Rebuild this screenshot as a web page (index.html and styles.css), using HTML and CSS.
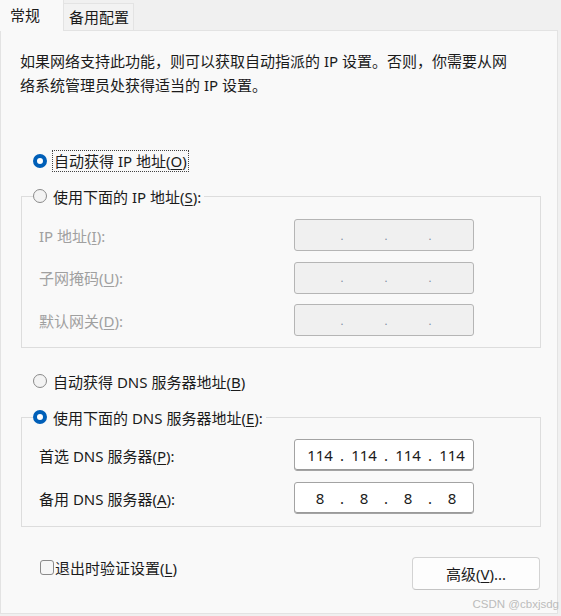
FILE: index.html
```html
<!DOCTYPE html>
<html lang="zh-CN">
<head>
<meta charset="utf-8">
<title>IPv4 属性</title>
<link rel="stylesheet" href="styles.css">
</head>
<body>
<div class="window">
  <div class="tabs">
    <div class="tab active">常规</div>
    <div class="tab">备用配置</div>
    <div class="tab-fill"></div>
  </div>
  <div class="panel">
    <p class="desc">如果网络支持此功能，则可以获取自动指派的 IP 设置。否则，你需要从网<br>络系统管理员处获得适当的 IP 设置。</p>

    <div class="option first"><span class="radio on"></span><span class="focus">自动获得 IP 地址(<u>O</u>)</span></div>

    <fieldset class="group ipgroup disabled">
      <legend class="option"><span class="radio"></span><span>使用下面的 IP 地址(<u>S</u>):</span></legend>
      <div class="field"><span class="lbl">IP 地址(<u>I</u>):</span>
        <div class="ip"><span class="oct"></span><span class="dot">.</span><span class="oct"></span><span class="dot">.</span><span class="oct"></span><span class="dot">.</span><span class="oct"></span></div></div>
      <div class="field"><span class="lbl">子网掩码(<u>U</u>):</span>
        <div class="ip"><span class="oct"></span><span class="dot">.</span><span class="oct"></span><span class="dot">.</span><span class="oct"></span><span class="dot">.</span><span class="oct"></span></div></div>
      <div class="field"><span class="lbl">默认网关(<u>D</u>):</span>
        <div class="ip"><span class="oct"></span><span class="dot">.</span><span class="oct"></span><span class="dot">.</span><span class="oct"></span><span class="dot">.</span><span class="oct"></span></div></div>
    </fieldset>

    <div class="option dns1"><span class="radio"></span><span>自动获得 DNS 服务器地址(<u>B</u>)</span></div>

    <fieldset class="group dnsgroup">
      <legend class="option"><span class="radio on"></span><span>使用下面的 DNS 服务器地址(<u>E</u>):</span></legend>
      <div class="field"><span class="lbl">首选 DNS 服务器(<u>P</u>):</span>
        <div class="ip"><span class="oct">114</span><span class="dot">.</span><span class="oct">114</span><span class="dot">.</span><span class="oct">114</span><span class="dot">.</span><span class="oct">114</span></div></div>
      <div class="field"><span class="lbl">备用 DNS 服务器(<u>A</u>):</span>
        <div class="ip"><span class="oct">8</span><span class="dot">.</span><span class="oct">8</span><span class="dot">.</span><span class="oct">8</span><span class="dot">.</span><span class="oct">8</span></div></div>
    </fieldset>

    <div class="bottom">
      <label class="check"><span class="box"></span><span>退出时验证设置(<u>L</u>)</span></label>
      <button class="btn" type="button">高级(<u>V</u>)...</button>
    </div>
    <div class="watermark">CSDN @cbxjsdg</div>
  </div>
</div>
</body>
</html>
```
FILE: styles.css
```css
* { box-sizing: border-box; }
html, body { margin: 0; padding: 0; }
body {
  background: #f0f0f0;
  width: 561px;
  height: 616px;
  overflow: hidden;
  font-family: "Noto Sans", "Noto Sans CJK SC", sans-serif;
  font-size: 15px;
  color: #1b1b1b;
}
u { text-decoration: underline; text-underline-offset: 2px; text-decoration-thickness: 1px; }

.window { width: 558px; }

.tabs { display: flex; height: 31px; align-items: flex-end; }
.tab {
  height: 28px;
  line-height: 27px;
  padding: 0 0 0 5px;
  background: #f2f2f2;
  border: 1px solid #e3e3e3;
  border-left: none;
  font-size: 15px;
  width: 70px;
  white-space: nowrap;
}
.tab.active {
  height: 31px;
  line-height: 30px;
  width: 64px;
  padding-left: 10px;
  background: #f9f9f9;
  border: none;
  border-right: 1px solid #e3e3e3;
}
.tab-fill { flex: 1; height: 1px; background: #e3e3e3; }

.panel {
  background: #f9f9f9;
  border: 1px solid #e3e3e3;
  border-top: none;
  height: 583px;
  padding: 18px 0 0 0;
}

.desc {
  margin: 0 0 0 19px;
  line-height: 24px;
  white-space: nowrap;
}

.option {
  display: flex;
  align-items: center;
  height: 24px;
  gap: 6px;
  white-space: nowrap;
}
.option.first { margin: 52px 0 0 32px; gap: 5px; }
.option.dns1 { margin: 21px 0 0 32px; }

.radio {
  width: 14px;
  height: 14px;
  border-radius: 50%;
  border: 1px solid #8a8a8a;
  background: #f3f3f3;
  flex: none;
}
.radio.on {
  border: 4px solid #005fb8;
  background: #ffffff;
}

.focus {
  border: 1px dotted #444;
  padding: 0 1px 0 1px;
  line-height: 20px;
}

.group {
  margin: 11px 0 0 20px;
  width: 520px;
  border: 1px solid #dddddd;
  padding: 11px 66px 11px 17px;
  min-inline-size: 0;
}
.group legend.option {
  margin-left: -6px;
  padding: 0 3px 0 0;
}
.dnsgroup { margin-top: 12px; padding-top: 10px; padding-bottom: 12px; }

.field {
  display: grid;
  grid-template-columns: 1fr 180px;
  align-items: center;
  height: 32px;
  white-space: nowrap;
}
.field + .field { margin-top: 10.5px; }
.dnsgroup .field + .field { margin-top: 11px; }

.disabled .lbl { color: #a0a0a0; }

.ip {
  display: flex;
  align-items: center;
  height: 32px;
  border: 1px solid #a3a3a3;
  border-radius: 3px;
  background: #ffffff;
  padding-left: 8px;
  box-shadow: inset 0 -1px 0 #9a9a9a;
}
.disabled .ip { background: #f0f0f0; border-color: #b5b5b5; box-shadow: none; }
.oct { width: 34px; text-align: center; font-family: "Noto Sans", sans-serif; font-size: 15px; }
.dot { width: 10px; text-align: center; font-size: 15px; }
.disabled .dot { color: #7a8aa0; font-size: 11px; }

.bottom {
  display: flex;
  justify-content: space-between;
  align-items: flex-start;
  margin: 30px 17px 0 39px;
  height: 33px;
}
.check { display: flex; align-items: center; gap: 1px; white-space: nowrap; height: 20px; }
.box {
  width: 14px;
  height: 15px;
  border: 1px solid #8a8a8a;
  border-radius: 3px;
  background: #f6f6f6;
}
.btn {
  width: 128px;
  height: 33px;
  background: #fdfdfd;
  border: 1px solid #d3d3d3;
  border-bottom-color: #c4c4c4;
  border-radius: 4px;
  font-family: inherit;
  font-size: 15px;
  color: #1b1b1b;
  padding: 0;
}

.watermark {
  margin-top: 7px;
  text-align: right;
  font-family: "Liberation Sans", sans-serif;
  font-size: 11.5px;
  line-height: 14px;
  color: #bcbcbc;
  margin-right: -2px;
}
```
